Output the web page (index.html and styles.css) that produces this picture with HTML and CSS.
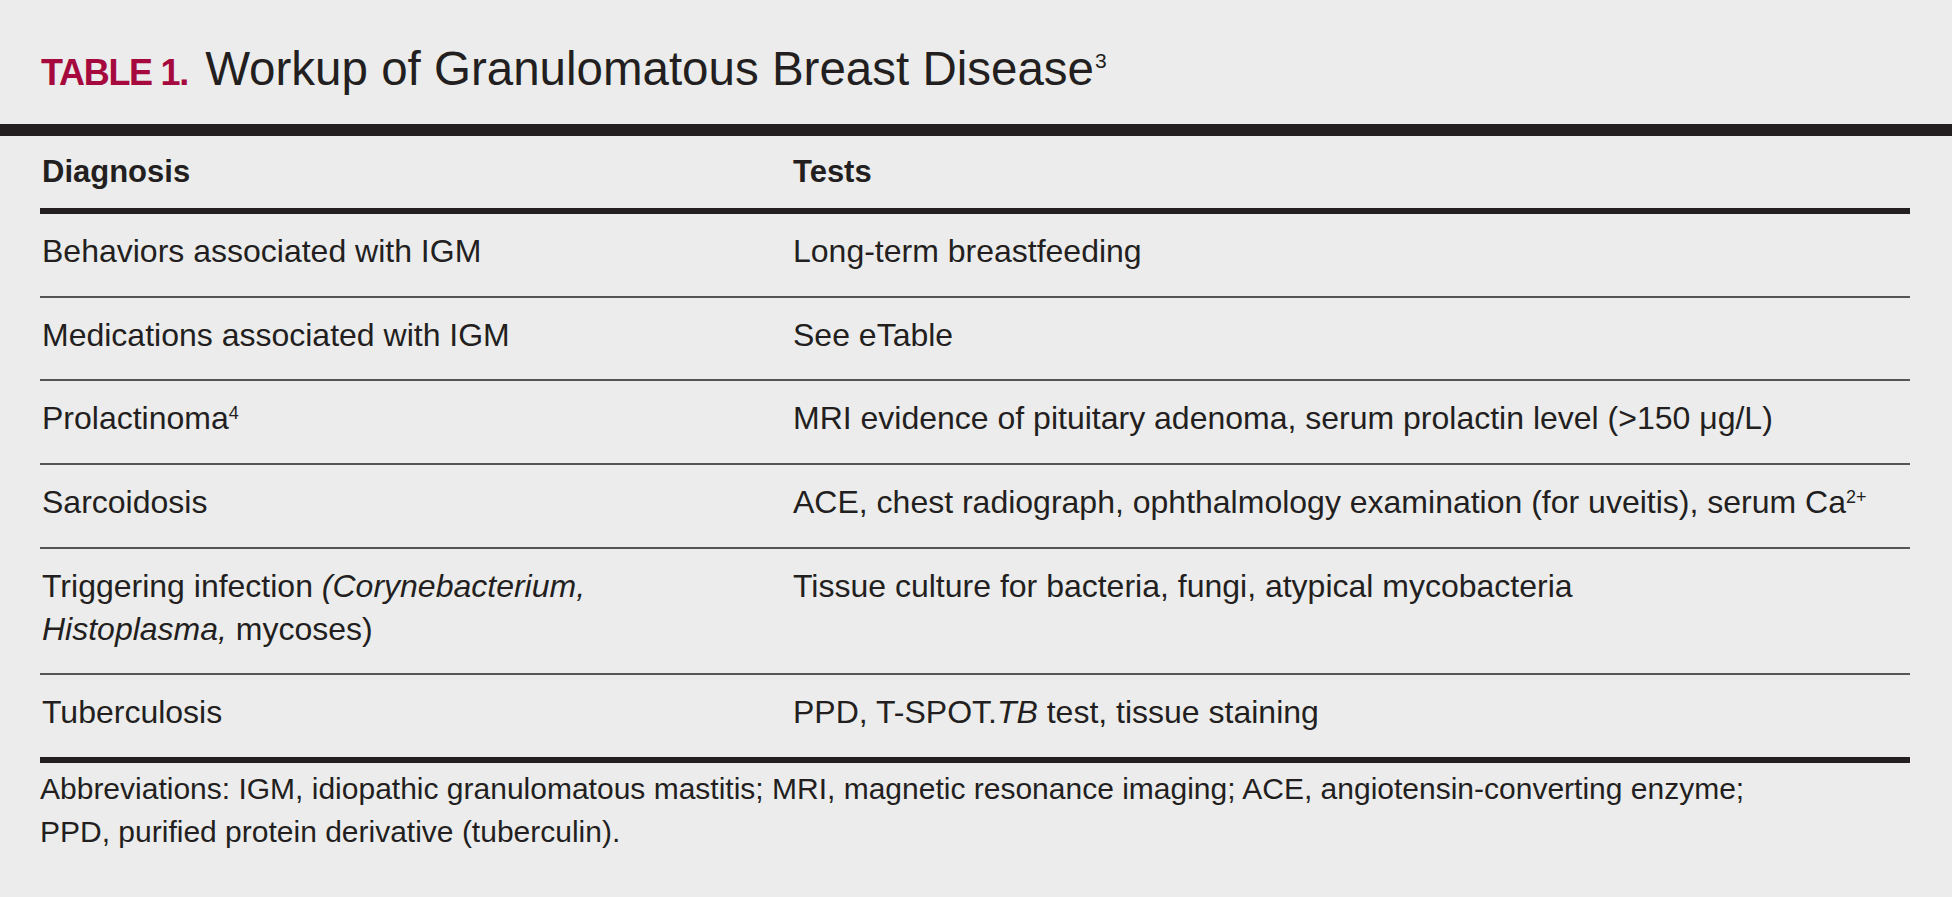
FILE: index.html
```html
<!DOCTYPE html>
<html lang="en">
<head>
<meta charset="utf-8">
<title>Table 1. Workup of Granulomatous Breast Disease</title>
<link rel="stylesheet" href="styles.css">
</head>
<body>
<header class="caption">
  <h1 class="title"><span class="label">TABLE 1.</span> Workup of Granulomatous Breast Disease<sup class="title-ref">3</sup></h1>
</header>
<div class="rule-top"></div>
<section class="table">
  <div class="row head">
    <div class="cell">Diagnosis</div>
    <div class="cell">Tests</div>
  </div>
  <div class="row">
    <div class="cell">Behaviors associated with IGM</div>
    <div class="cell">Long-term breastfeeding</div>
  </div>
  <div class="row">
    <div class="cell">Medications associated with IGM</div>
    <div class="cell">See eTable</div>
  </div>
  <div class="row">
    <div class="cell">Prolactinoma<sup class="ref">4</sup></div>
    <div class="cell">MRI evidence of pituitary adenoma, serum prolactin level (&gt;150 μg/L)</div>
  </div>
  <div class="row">
    <div class="cell">Sarcoidosis</div>
    <div class="cell">ACE, chest radiograph, ophthalmology examination (for uveitis), serum Ca<sup class="ref">2+</sup></div>
  </div>
  <div class="row">
    <div class="cell">Triggering infection <em>(Corynebacterium,</em><br><em>Histoplasma,</em> mycoses)</div>
    <div class="cell">Tissue culture for bacteria, fungi, atypical mycobacteria</div>
  </div>
  <div class="row last">
    <div class="cell">Tuberculosis</div>
    <div class="cell">PPD, T-SPOT.<em>TB</em> test, tissue staining</div>
  </div>
</section>
<p class="notes">Abbreviations: IGM, idiopathic granulomatous mastitis; MRI, magnetic resonance imaging; ACE, angiotensin-converting enzyme;<br>PPD, purified protein derivative (tuberculin).</p>
</body>
</html>
```
FILE: styles.css
```css
html, body {
  margin: 0;
  padding: 0;
}

body {
  background: #ececec;
  color: #231f20;
  font-family: "Liberation Sans", Arial, sans-serif;
  width: 1952px;
  height: 897px;
  overflow: hidden;
}

.caption {
  padding: 41px 0 27px 41px;
}

.title {
  margin: 0;
  font-size: 47.5px;
  font-weight: normal;
  line-height: 56px;
  white-space: nowrap;
}

.label {
  color: #a6093d;
  font-weight: bold;
  font-size: 36px;
  line-height: 1;
  letter-spacing: -1.3px;
  margin-right: 4px;
}

.title-ref {
  font-size: 21px;
  vertical-align: 17px;
  line-height: 0;
  margin-left: 1px;
}

.rule-top {
  height: 12px;
  background: #231f20;
}

.table {
  margin: 0 42px 0 40px;
}

.row {
  display: grid;
  grid-template-columns: 751px 1fr;
  font-size: 32px;
  line-height: 42.7px;
  padding: 16px 0 23px;
  border-bottom: 2px solid #555;
}

.row.head {
  font-size: 31px;
  font-weight: bold;
  line-height: 42px;
  padding: 15px 0 15px;
  border-bottom: 6px solid #231f20;
}

.row.last {
  border-bottom: 6px solid #231f20;
}

.cell {
  padding-left: 2px;
  white-space: nowrap;
}

.ref {
  font-size: 18px;
  vertical-align: 10px;
  line-height: 1;
}

em {
  font-style: italic;
}

.notes {
  margin: 4px 0 0 40px;
  font-size: 30px;
  line-height: 43.5px;
}
```
